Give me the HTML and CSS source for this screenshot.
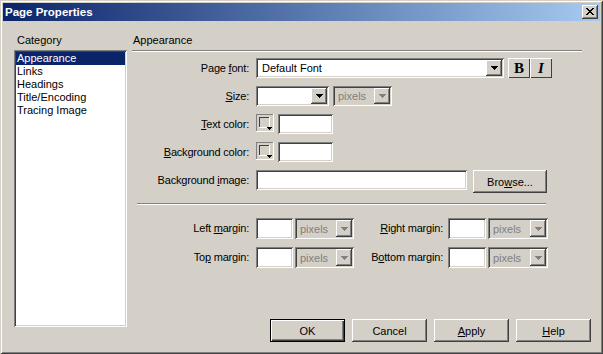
FILE: index.html
```html
<!DOCTYPE html>
<html>
<head>
    <title>Page Properties</title>
    <meta charset="utf-8">
    <link rel="stylesheet" href="styles.css">
</head>
<body>
    <div class="window">
        <div class="titlebar">
            <span class="title">Page Properties</span>
            <span class="close raised">
                <svg width="8" height="7" shape-rendering="crispEdges">
                    <path d="M0 0h2v1h-2zM6 0h2v1h-2zM1 1h2v1h-2zM5 1h2v1h-2zM2 2h4v1h-4zM3 3h2v1h-2zM2 4h4v1h-4zM1 5h2v1h-2zM5 5h2v1h-2zM0 6h2v1h-2zM6 6h2v1h-2z" fill="#000"/>
                </svg>
            </span>
        </div>
        <div class="content">
            <div class="category">
                <div class="caption">Category</div>
                <ul class="list sunken">
                    <li class="selected">Appearance</li>
                    <li>Links</li>
                    <li>Headings</li>
                    <li>Title/Encoding</li>
                    <li>Tracing Image</li>
                </ul>
            </div>
            <div class="panel">
                <div class="caption">Appearance</div>
                <div class="rule rule-top"></div>

                <div class="fields">
                    <label>Page <u>f</u>ont:</label>
                    <div class="line">
                        <div class="select sunken w-font">
                            <span>Default Font</span>
                            <span class="drop raised">
                                <svg width="7" height="4" shape-rendering="crispEdges"><path d="M0 0h7v1h-1v1h-1v1h-1v1h-1v-1h-1v-1h-1v-1h-1z" fill="#000"/></svg>
                            </span>
                        </div>
                        <div class="styles">
                            <span class="style bold">B</span>
                            <span class="style italic">I</span>
                        </div>
                    </div>

                    <label><u>S</u>ize:</label>
                    <div class="line">
                        <div class="select sunken w-size">
                            <span></span>
                            <span class="drop raised">
                                <svg width="7" height="4" shape-rendering="crispEdges"><path d="M0 0h7v1h-1v1h-1v1h-1v1h-1v-1h-1v-1h-1v-1h-1z" fill="#000"/></svg>
                            </span>
                        </div>
                        <div class="select sunken off w-unit">
                            <span>pixels</span>
                            <span class="drop raised">
                                <svg width="7" height="4" shape-rendering="crispEdges"><path d="M0 0h7v1h-1v1h-1v1h-1v1h-1v-1h-1v-1h-1v-1h-1z" fill="#808080"/></svg>
                            </span>
                        </div>
                    </div>

                    <label><u>T</u>ext color:</label>
                    <div class="line">
                        <span class="swatch">
                            <svg width="18" height="18" shape-rendering="crispEdges">
                                <rect x="0" y="0" width="18" height="18" fill="#d4d0c8"/>
                                <path d="M0 0h17v1h-16v16h-1z" fill="#808080"/>
                                <path d="M17 0h1v18h-18v-1h17z" fill="#fff"/>
                                <path d="M3 3h10v1h-9v9h-1z" fill="#404040"/>
                                <path d="M13 3h1v11h-11v-1h10z" fill="#fff"/>
                                <path d="M11 13h5v1h-1v1h-1v1h-1v-1h-1v-1h-1z" fill="#000"/>
                            </svg>
                        </span>
                        <div class="field sunken w-color"></div>
                    </div>

                    <label><u>B</u>ackground color:</label>
                    <div class="line">
                        <span class="swatch">
                            <svg width="18" height="18" shape-rendering="crispEdges">
                                <rect x="0" y="0" width="18" height="18" fill="#d4d0c8"/>
                                <path d="M0 0h17v1h-16v16h-1z" fill="#808080"/>
                                <path d="M17 0h1v18h-18v-1h17z" fill="#fff"/>
                                <path d="M3 3h10v1h-9v9h-1z" fill="#404040"/>
                                <path d="M13 3h1v11h-11v-1h10z" fill="#fff"/>
                                <path d="M11 13h5v1h-1v1h-1v1h-1v-1h-1v-1h-1z" fill="#000"/>
                            </svg>
                        </span>
                        <div class="field sunken w-color"></div>
                    </div>

                    <label>Background <u>i</u>mage:</label>
                    <div class="line wide-gap">
                        <div class="field sunken w-image"></div>
                        <span class="btn raised browse">Bro<u>w</u>se...</span>
                    </div>
                </div>

                <div class="rule rule-mid"></div>

                <div class="margins">
                    <label>Left <u>m</u>argin:</label>
                    <div class="field sunken w-left"></div>
                    <div class="select sunken off tall">
                        <span>pixels</span>
                        <span class="drop raised">
                            <svg width="7" height="4" shape-rendering="crispEdges"><path d="M0 0h7v1h-1v1h-1v1h-1v1h-1v-1h-1v-1h-1v-1h-1z" fill="#808080"/></svg>
                        </span>
                    </div>
                    <label class="r"><u>R</u>ight margin:</label>
                    <div class="field sunken w-right"></div>
                    <div class="select sunken off tall">
                        <span>pixels</span>
                        <span class="drop raised">
                            <svg width="7" height="4" shape-rendering="crispEdges"><path d="M0 0h7v1h-1v1h-1v1h-1v1h-1v-1h-1v-1h-1v-1h-1z" fill="#808080"/></svg>
                        </span>
                    </div>

                    <label>To<u>p</u> margin:</label>
                    <div class="field sunken w-left"></div>
                    <div class="select sunken off tall">
                        <span>pixels</span>
                        <span class="drop raised">
                            <svg width="7" height="4" shape-rendering="crispEdges"><path d="M0 0h7v1h-1v1h-1v1h-1v1h-1v-1h-1v-1h-1v-1h-1z" fill="#808080"/></svg>
                        </span>
                    </div>
                    <label class="r">B<u>o</u>ttom margin:</label>
                    <div class="field sunken w-right"></div>
                    <div class="select sunken off tall">
                        <span>pixels</span>
                        <span class="drop raised">
                            <svg width="7" height="4" shape-rendering="crispEdges"><path d="M0 0h7v1h-1v1h-1v1h-1v1h-1v-1h-1v-1h-1v-1h-1z" fill="#808080"/></svg>
                        </span>
                    </div>
                </div>

                <div class="buttons">
                    <span class="btn default">OK</span>
                    <span class="btn raised">Cancel</span>
                    <span class="btn raised"><u>A</u>pply</span>
                    <span class="btn raised"><u>H</u>elp</span>
                </div>
            </div>
        </div>
    </div>
</body>
</html>
```

FILE: styles.css
```css
* {
    box-sizing: border-box;
}
body {
    margin: 0;
    background: #d4d0c8;
    color: #000;
    font-family: "Liberation Sans", Arial, sans-serif;
    font-size: 11px;
}
ul {
    margin: 0;
    padding: 0;
    list-style: none;
}
u {
    text-decoration: underline;
    text-underline-offset: 1px;
}

/* bevels */
.raised {
    background: #d4d0c8;
    box-shadow: inset -1px -1px #404040, inset 1px 1px #fff, inset -2px -2px #808080;
}
.sunken {
    background: #fff;
    box-shadow: inset 1px 1px #808080, inset -1px -1px #fff, inset 2px 2px #404040, inset -2px -2px #d4d0c8;
}

/* window */
.window {
    width: 603px;
    height: 354px;
    padding: 3px;
    display: flex;
    flex-direction: column;
    background: #d4d0c8;
    box-shadow: inset 1px 1px #d4d0c8, inset -1px -1px #404040, inset 2px 2px #fff, inset -2px -2px #808080;
}
.titlebar {
    height: 18px;
    display: flex;
    align-items: center;
    padding: 0 2px;
    background: linear-gradient(to right, #0a246a, #a6caf0);
    color: #fff;
    font-weight: bold;
}
.title {
    flex: 1;
    line-height: 18px;
    font-size: 11.5px;
}
.close {
    width: 16px;
    height: 14px;
    display: flex;
    align-items: center;
    justify-content: center;
    padding-bottom: 1px;
}

.content {
    flex: 1;
    display: flex;
    padding: 13px 0 0 11px;
}
.caption {
    height: 16px;
    line-height: 13px;
    padding-left: 3px;
}

/* category list */
.category {
    width: 113px;
    display: flex;
    flex-direction: column;
}
.list {
    height: 277px;
    padding: 2px;
}
.list li {
    height: 13px;
    line-height: 13px;
    padding-left: 1px;
}
.list .selected {
    background: #0a246a;
    color: #fff;
}

/* right panel */
.panel {
    width: 460px;
    margin-left: 5px;
    display: flex;
    flex-direction: column;
}
.panel > .caption {
    padding-left: 1px;
}
.rule {
    height: 2px;
    border-top: 1px solid #808080;
    border-bottom: 1px solid #fff;
}
.rule-top {
    width: 450px;
}
.rule-mid {
    width: 409px;
    margin: 10px 0 0 5px;
}

.fields {
    margin-top: 6px;
    display: grid;
    grid-template-columns: 124px auto;
    grid-template-rows: 20px 20px 20px 20px 23px;
    row-gap: 8px;
}
.fields label,
.margins label {
    text-align: right;
    padding-right: 7px;
    line-height: 20px;
    white-space: nowrap;
    letter-spacing: -0.2px;
}
.margins label {
    line-height: 21px;
}
.margins label.r {
    padding-right: 5px;
}
.line {
    display: flex;
    align-items: flex-start;
    gap: 4px;
}
.line.wide-gap {
    gap: 6px;
}

/* inputs */
.field {
    height: 20px;
}
.w-color {
    width: 55px;
}
.w-image {
    width: 211px;
}
.w-left {
    width: 37px;
    height: 21px;
}
.w-right {
    width: 38px;
    height: 21px;
}

.select {
    height: 20px;
    display: flex;
    align-items: center;
    padding: 2px 2px 2px 6px;
}
.select span:first-child {
    flex: 1;
    white-space: nowrap;
    overflow: hidden;
}
.select.off {
    background: #d4d0c8;
    color: #808080;
    padding-left: 5px;
}
.select.tall {
    height: 21px;
}
.w-font {
    width: 248px;
}
.w-size {
    width: 73px;
}
.w-unit {
    width: 59px;
}
.drop {
    width: 16px;
    height: 16px;
    flex: none;
    display: flex;
    align-items: center;
    justify-content: center;
}
.tall .drop {
    height: 17px;
}

.swatch {
    width: 18px;
    height: 18px;
    display: flex;
}

.styles {
    display: flex;
}
.style {
    width: 22px;
    height: 20px;
    display: flex;
    align-items: center;
    justify-content: center;
    box-shadow: inset 1px 1px #fff, inset -1px -1px #404040;
    font-family: "Liberation Serif", "Times New Roman", serif;
    font-size: 15px;
    font-weight: bold;
}
.style.italic {
    font-style: italic;
}

.margins {
    margin-top: 13px;
    display: grid;
    grid-template-columns: 124px 39px 59px 94px 40px 60px;
    grid-auto-rows: 21px;
    row-gap: 8px;
}

/* buttons */
.btn {
    width: 75px;
    height: 23px;
    display: flex;
    align-items: center;
    justify-content: center;
}
.btn.browse {
    width: 74px;
}
.btn.default {
    background: #d4d0c8;
    box-shadow: inset 0 0 0 1px #000, inset 2px 2px #fff, inset -2px -2px #404040, inset -3px -3px #808080;
}
.buttons {
    display: flex;
    gap: 7px;
    margin: 51px 0 0 138px;
}
```
